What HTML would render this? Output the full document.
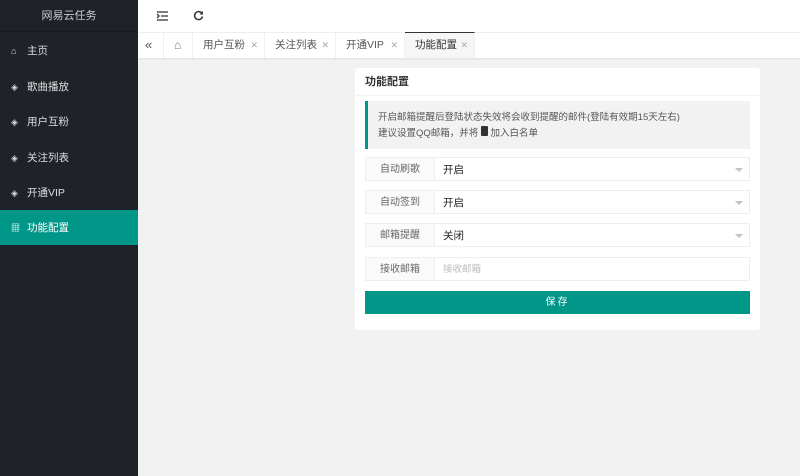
<!DOCTYPE html><html><head><meta charset="utf-8"><style>
*{margin:0;padding:0;box-sizing:border-box}
body{width:800px;height:476px;overflow:hidden;background:#f2f2f2;font-family:"Liberation Sans","Noto Sans CJK SC",sans-serif;font-size:10px;color:#333;position:relative}
.side{position:absolute;left:0;top:0;width:138px;height:476px;background:#20222a;color:#d6d6d6}
.logo{height:32px;line-height:33px;text-align:center;font-size:11px;color:#ccc;background:#1f2129;border-bottom:1px solid #1a1b22}
.it{height:35.5px;line-height:38px;padding-left:11px;font-size:10.5px;color:#ddd}
.it span{display:inline-block;width:16px;font-size:9px}
.it.act{background:#009688;color:#fff;line-height:36px}
.top{position:absolute;left:138px;top:0;right:0;height:32px;background:#fff}
.tabs{position:absolute;left:138px;top:32px;right:0;height:26px;background:#fff;border-top:1px solid #eee;box-shadow:0 1px 2px rgba(0,0,0,.08)}
.tab{position:absolute;top:0;height:25px;line-height:25px;font-size:10.5px;color:#555;border-right:1px solid #f0f0f0;padding-left:10px}
.tab i{font-style:normal;color:#aaa;font-size:9px;position:absolute;right:6px}
.card{position:absolute;left:355px;top:68px;width:405px;height:262px;background:#fff;border-radius:3px}
.ct{height:28px;line-height:29px;padding-left:10px;font-size:11px;font-weight:bold;color:#333;border-bottom:1px solid #f4f4f4}
.alert{position:absolute;left:10px;top:33px;width:385px;height:48px;background:#f2f2f2;border-left:3px solid #009688;padding:9px 0 0 10px;font-size:9.5px;line-height:16px;color:#555}
.row{position:absolute;left:10px;width:385px;height:24px;border:1px solid #eee}
.row .l{position:absolute;left:0;top:0;width:69px;height:22px;line-height:24px;text-align:center;background:#fafafa;border-right:1px solid #eee;color:#666;font-size:10px}
.row .v{position:absolute;left:77px;top:0;line-height:24px;font-size:10.5px;color:#222}
.row .a{position:absolute;right:6px;top:10px;border:4px solid transparent;border-top:4px solid #c2c2c2;border-bottom:0}
.btn{position:absolute;left:10px;top:223px;width:385px;height:23px;background:#009688;color:#fff;text-align:center;line-height:24px;font-size:10px;letter-spacing:2px}
</style></head><body>
<div class="side"><div class="logo">网易云任务</div>
<div class="it"><span>⌂</span>主页</div>
<div class="it"><span>◈</span>歌曲播放</div>
<div class="it"><span>◈</span>用户互粉</div>
<div class="it"><span>◈</span>关注列表</div>
<div class="it"><span>◈</span>开通VIP</div>
<div class="it act"><span>▦</span>功能配置</div></div>
<div class="top"><svg style="position:absolute;left:19px;top:11px" width="11" height="10"><path d="M0 1h11M4 5h7M0 9h11M0 3l2 2-2 2" stroke="#333" stroke-width="1.3" fill="none"/></svg>
<svg style="position:absolute;left:55px;top:10px" width="11" height="11" viewBox="0 0 11 11"><path d="M9 3.5A4 4 0 1 0 9.5 6.5" stroke="#333" stroke-width="1.5" fill="none"/><path d="M10 1v3.5H6.5z" fill="#333"/></svg></div>
<div class="tabs">
<div class="tab" style="left:0;width:26px;padding-left:7px;font-size:13px;line-height:23px">«</div>
<div class="tab" style="left:26px;width:29px;font-size:12px;color:#777">⌂</div>
<div class="tab" style="left:55px;width:72px">用户互粉<i>✕</i></div>
<div class="tab" style="left:127px;width:71px">关注列表<i>✕</i></div>
<div class="tab" style="left:198px;width:69px">开通VIP<i>✕</i></div>
<div class="tab" style="left:267px;width:70px;background:#f6f6f6;border-top:1px solid #333;top:-1px;height:26px;color:#333">功能配置<i>✕</i></div>
</div>
<div class="card"><div class="ct">功能配置</div>
<div class="alert">开启邮箱提醒后登陆状态失效将会收到提醒的邮件(登陆有效期15天左右)<br>建议设置QQ邮箱，并将 <span style="display:inline-block;width:7px;height:10px;background:#333;border-radius:1px"></span> 加入白名单</div>
<div class="row" style="top:89px"><div class="l">自动刷歌</div><div class="v">开启</div><div class="a"></div></div>
<div class="row" style="top:122px"><div class="l">自动签到</div><div class="v">开启</div><div class="a"></div></div>
<div class="row" style="top:155px"><div class="l">邮箱提醒</div><div class="v">关闭</div><div class="a"></div></div>
<div class="row" style="top:189px"><div class="l">接收邮箱</div><div class="v" style="color:#bbb;font-size:9.5px">接收邮箱</div></div>
<div class="btn">保存</div>
</div>
</body></html>
